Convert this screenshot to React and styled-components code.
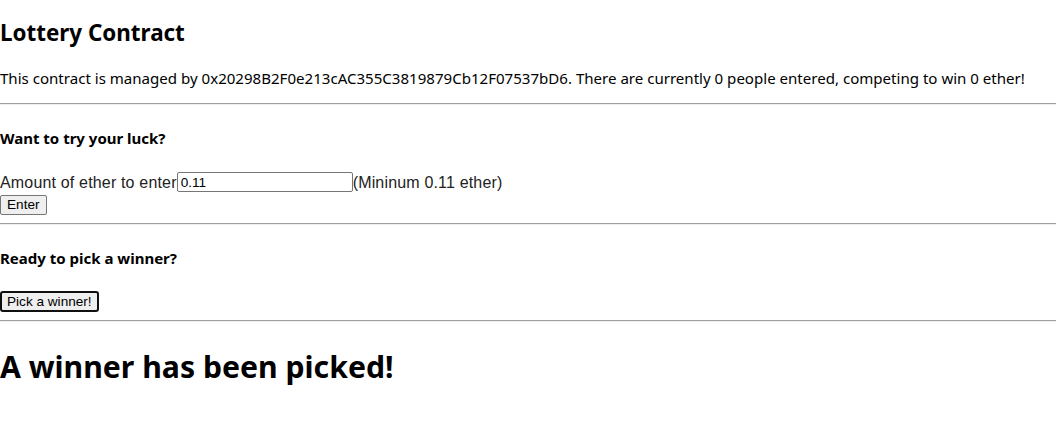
import React from "react";
import styled, { createGlobalStyle } from "styled-components";

const Global = createGlobalStyle`
  body {
    margin: 0;
    background: #fff;
    color: #000;
    font-family: "Noto Sans", "Open Sans", sans-serif;
  }
`;

const Page = styled.div`
  font-size: 15px;
  line-height: 21px;
`;

const Title = styled.h2`
  font-size: 22.4px;
  font-weight: 700;
  line-height: 32px;
  margin: 17px 0 19px;
`;

const Info = styled.p`
  margin: 19px 0 14px;
  font-size: 15.07px;
`;

const Rule = styled.hr`
  margin: 8px 0;
  border: none;
  border-top: 1px solid #a0a0a0;
  border-bottom: 1px solid #eee;
`;

const SubTitle = styled.h4`
  font-size: 15px;
  font-weight: 700;
  margin: 23px 0 22px;
`;

const Row = styled.div`
  display: flex;
  align-items: center;
  height: 22px;
  font-family: "Liberation Sans", Arial, sans-serif;
  font-size: 16px;
  letter-spacing: 0.17px;
  color: #222;
`;

const AmountInput = styled.input`
  width: 176px;
  height: 20px;
  box-sizing: border-box;
  border: 1px solid #767676;
  border-radius: 2px;
  padding: 1px 3px;
  font-family: "Liberation Sans", Arial, sans-serif;
  font-size: 13.6px;
  letter-spacing: 0;
  color: #000;
  outline: none;
`;

const Button = styled.button`
  display: block;
  box-sizing: border-box;
  font-family: "Liberation Sans", Arial, sans-serif;
  font-size: 13.6px;
  color: #000;
  background: #efefef;
  border: ${(p) => (p.$focused ? "2px solid #101010" : "1px solid #767676")};
  border-radius: ${(p) => (p.$focused ? "3px" : "2px")};
  padding: ${(p) => (p.$focused ? "0 5px" : "0 6px")};
  height: ${(p) => (p.$focused ? "21px" : "20px")};
  line-height: 16px;
  margin: ${(p) => p.$margin || "0"};
`;

const Banner = styled.h1`
  font-size: 30.2px;
  font-weight: 700;
  line-height: 40px;
  margin: 25px 0 21px;
`;

export default function App() {
  return (
    <Page>
      <Global />
      <Title>Lottery Contract</Title>
      <Info>
        This contract is managed by 0x20298B2F0e213cAC355C3819879Cb12F07537bD6.
        There are currently 0 people entered, competing to win 0 ether!
      </Info>
      <Rule />
      <SubTitle>Want to try your luck?</SubTitle>
      <Row>
        <span>Amount of ether to enter</span>
        <AmountInput defaultValue="0.11" />
        <span>(Mininum 0.11 ether)</span>
      </Row>
      <Button $margin="2px 0 8px">Enter</Button>
      <Rule />
      <SubTitle>Ready to pick a winner?</SubTitle>
      <Button $focused $margin="0 0 8px">Pick a winner!</Button>
      <Rule />
      <Banner>A winner has been picked!</Banner>
    </Page>
  );
}
